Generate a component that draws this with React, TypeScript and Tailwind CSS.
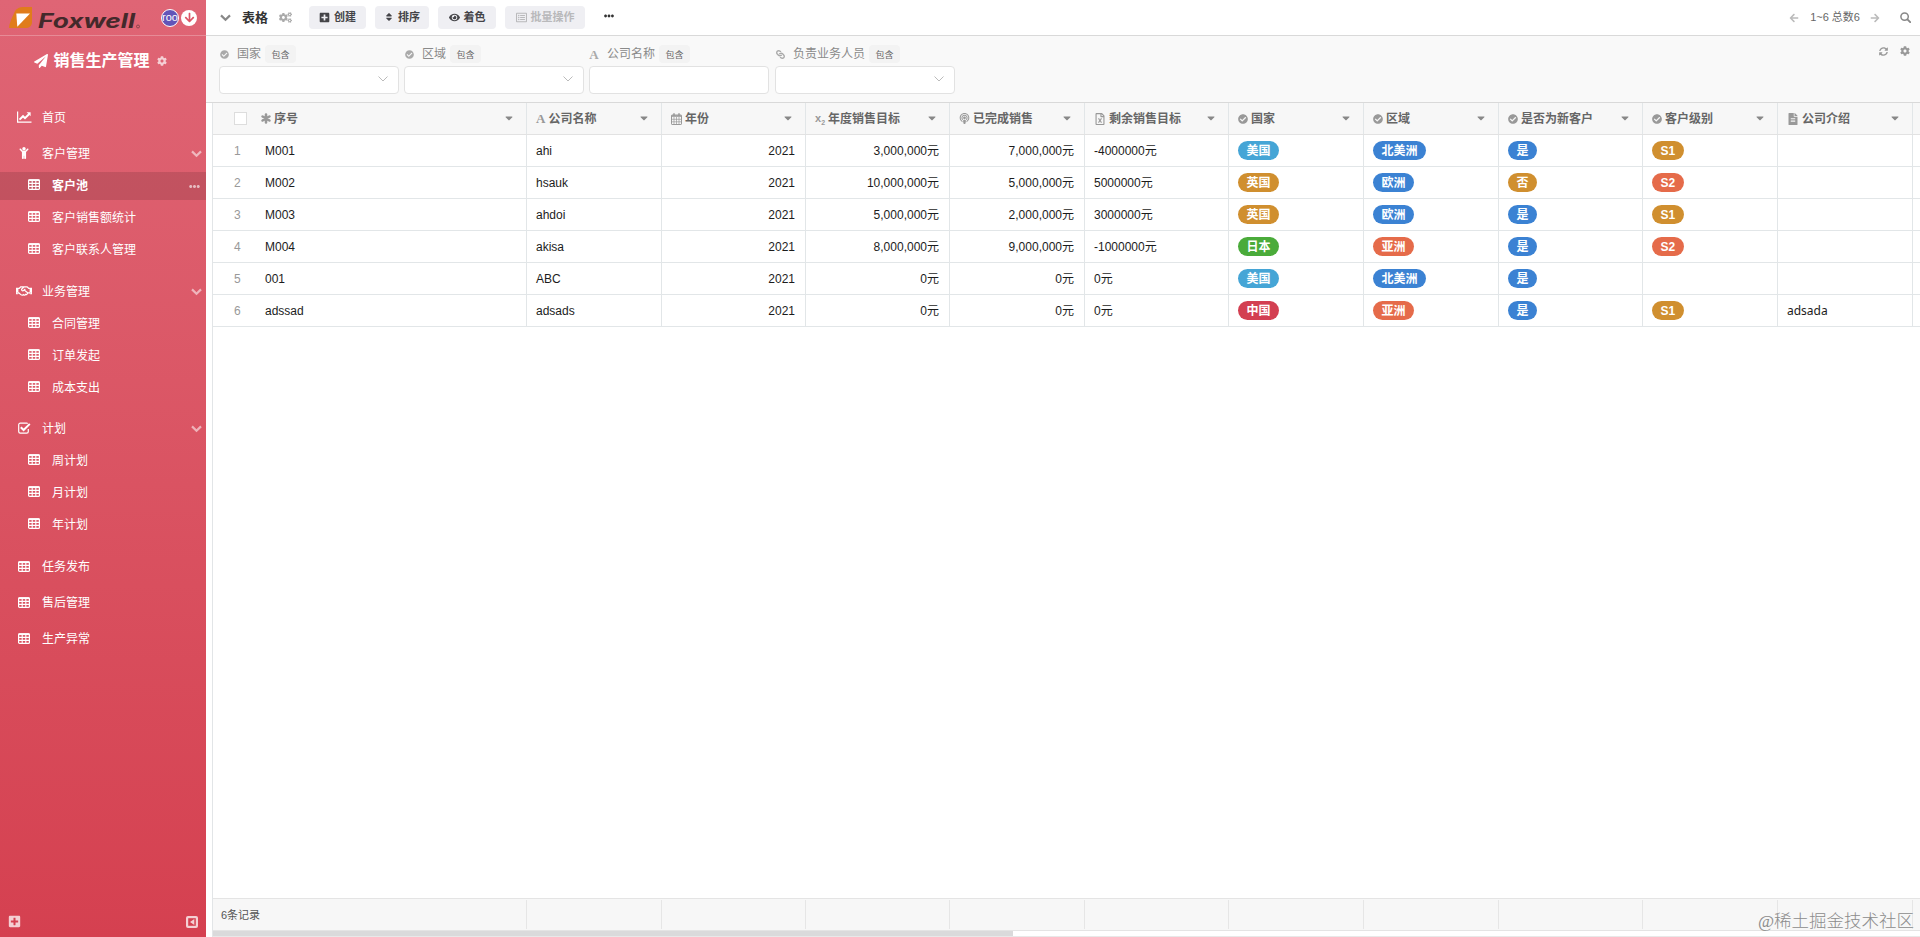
import type { ReactNode } from "react"
import clsx from "clsx"
import {
  FaArrowDown, FaArrowLeft, FaArrowRight, FaCaretDown, FaCheckCircle, FaChild, FaCog, FaCogs, FaEllipsisH,
  FaEye, FaFileAlt, FaLink, FaPaperPlane, FaPlusSquare, FaPodcast, FaRegFileExcel, FaRegHandshake,
  FaRegListAlt, FaSort, FaSyncAlt,
} from "react-icons/fa"

interface NavItem {
  title: string
  icon: ReactNode
  gap?: string
  children?: string[]
}

interface Column {
  title: string
  icon: ReactNode
  width: string
}

interface Filter {
  title: string
  icon: ReactNode
  width: string
  select: boolean
}

function TableIcon() {
  return (
    <svg width="12" height="11" viewBox="0 0 12 11" fill="none" stroke="currentColor">
      <rect x="0.6" y="0.8" width="10.8" height="9.6" rx="1" strokeWidth="1.2" />
      <path d="M0.5 1.2h11" strokeWidth="1.8" />
      <path d="M4.2 1v9.4M7.8 1v9.4M1 4.4h10M1 7.4h10" strokeWidth="1.1" />
    </svg>
  )
}

function ChartIcon() {
  return (
    <svg width="15" height="12" viewBox="0 0 15 12" fill="none" stroke="currentColor">
      <path d="M0.6 0.5v10.7H14.5" strokeWidth="1.2" />
      <path d="M2.5 8.6L6 5.2L8 7.2L12.2 3" strokeWidth="2" />
      <path d="M9.6 1.2h4v4z" fill="currentColor" stroke="none" />
    </svg>
  )
}

function CheckSquareIcon() {
  return (
    <svg width="13" height="12" viewBox="0 0 13 12" fill="none" stroke="currentColor">
      <path d="M10.3 7v2.6a1.6 1.6 0 0 1-1.6 1.6H2.3A1.6 1.6 0 0 1 0.7 9.6V2.8A1.6 1.6 0 0 1 2.3 1.2h6.4q0.6 0 1 0.3" strokeWidth="1.2" />
      <path d="M2.8 5.2L5.6 8L11.8 1.9" strokeWidth="2" />
    </svg>
  )
}

function ChevronIcon({ className }: { className?: string }) {
  return (
    <svg width="11" height="8" viewBox="0 0 11 8" fill="none" stroke="currentColor" strokeWidth="2.2" className={className}>
      <path d="M1 1.4L5.5 5.8L10 1.4" />
    </svg>
  )
}

function AsteriskIcon() {
  return (
    <svg width="10" height="11" viewBox="0 0 10 11" stroke="currentColor" strokeWidth="2.6" strokeLinecap="round">
      <path d="M5 1.5v8M1.6 3.5l6.8 4M8.4 3.5l-6.8 4" />
    </svg>
  )
}

function CalendarIcon() {
  return (
    <svg width="11" height="12" viewBox="0 0 11 12" fill="none" stroke="currentColor">
      <rect x="0.5" y="2" width="10" height="9.5" rx="0.6" />
      <path d="M0.5 3h10" strokeWidth="1.6" />
      <path d="M3 0.3v2.4M8 0.3v2.4" strokeWidth="1.5" />
      <path d="M3 4v7M5.5 4v7M8 4v7M1 6.3h9M1 8.8h9" strokeWidth="0.7" />
    </svg>
  )
}

function SearchIcon() {
  return (
    <svg width="11" height="11" viewBox="0 0 11 11" fill="none" stroke="currentColor" className="mr-[9px] ml-5 text-[#888]">
      <circle cx="4.6" cy="4.6" r="3.7" strokeWidth="1.5" />
      <path d="M7.4 7.4l2.8 2.8" strokeWidth="1.9" strokeLinecap="round" />
    </svg>
  )
}

function LetterIcon() {
  return <span className="font-['Liberation_Serif',serif] text-[13px] leading-none font-bold">A</span>
}

function SubscriptIcon() {
  return (
    <span className="flex items-end leading-none font-bold">
      <span className="text-[11px]">x</span>
      <span className="-mb-0.5 text-[7px]">2</span>
    </span>
  )
}

function Logo() {
  return (
    <svg width="134" height="26" viewBox="0 0 134 26" className="overflow-visible">
      <path d="M7 6Q10 2 15 2H24V17Q24 22 19 23H1Q1 20 3 15Z" fill="#e07c1c" />
      <path d="M8.3 8.5H22L9.3 21.7Z" fill="#fff" />
      <text
        x="30"
        y="22.5"
        textLength="97"
        lengthAdjust="spacingAndGlyphs"
        fontFamily="Inter"
        fontSize="19.5"
        fontWeight="700"
        fontStyle="italic"
        fill="#43292b"
      >
        Foxwell
      </text>
      <circle cx="130" cy="21.5" r="1.5" fill="none" stroke="#43292b" strokeWidth="0.5" />
    </svg>
  )
}

const navItems: NavItem[] = [
  { title: "首页", icon: <ChartIcon /> },
  { title: "客户管理", icon: <FaChild size={12} />, children: ["客户池", "客户销售额统计", "客户联系人管理"] },
  { title: "业务管理", icon: <FaRegHandshake size={16} />, gap: "mt-2", children: ["合同管理", "订单发起", "成本支出"] },
  { title: "计划", icon: <CheckSquareIcon />, gap: "mt-[7px]", children: ["周计划", "月计划", "年计划"] },
  { title: "任务发布", icon: <TableIcon />, gap: "mt-2" },
  { title: "售后管理", icon: <TableIcon /> },
  { title: "生产异常", icon: <TableIcon /> },
]

const filters: Filter[] = [
  { title: "国家", icon: <FaCheckCircle size={9} />, width: "w-[185px]", select: true },
  { title: "区域", icon: <FaCheckCircle size={9} />, width: "w-[185px]", select: true },
  { title: "公司名称", icon: <LetterIcon />, width: "w-[186px]", select: false },
  { title: "负责业务人员", icon: <FaLink size={9} className="rotate-90" />, width: "w-[185px]", select: true },
]

const columns: Column[] = [
  { title: "序号", icon: <AsteriskIcon />, width: "w-[314px]" },
  { title: "公司名称", icon: <LetterIcon />, width: "w-[135px]" },
  { title: "年份", icon: <CalendarIcon />, width: "w-[144px]" },
  { title: "年度销售目标", icon: <SubscriptIcon />, width: "w-[144px]" },
  { title: "已完成销售", icon: <FaPodcast size={11} />, width: "w-[135px]" },
  { title: "剩余销售目标", icon: <FaRegFileExcel size={12} />, width: "w-[144px]" },
  { title: "国家", icon: <FaCheckCircle size={10} />, width: "w-[135px]" },
  { title: "区域", icon: <FaCheckCircle size={10} />, width: "w-[135px]" },
  { title: "是否为新客户", icon: <FaCheckCircle size={10} />, width: "w-[144px]" },
  { title: "客户级别", icon: <FaCheckCircle size={10} />, width: "w-[135px]" },
  { title: "公司介绍", icon: <FaFileAlt size={12} />, width: "w-[135px]" },
]

const rows: string[][] = [
  ["M001", "ahi", "2021", "3,000,000元", "7,000,000元", "-4000000元", "美国", "北美洲", "是", "S1", ""],
  ["M002", "hsauk", "2021", "10,000,000元", "5,000,000元", "5000000元", "英国", "欧洲", "否", "S2", ""],
  ["M003", "ahdoi", "2021", "5,000,000元", "2,000,000元", "3000000元", "英国", "欧洲", "是", "S1", ""],
  ["M004", "akisa", "2021", "8,000,000元", "9,000,000元", "-1000000元", "日本", "亚洲", "是", "S2", ""],
  ["001", "ABC", "2021", "0元", "0元", "0元", "美国", "北美洲", "是", "", ""],
  ["adssad", "adsads", "2021", "0元", "0元", "0元", "中国", "亚洲", "是", "S1", "adsada"],
]

const tagColors: Record<string, string> = {
  美国: "bg-[#45a5d6]",
  英国: "bg-[#d08f2f]",
  日本: "bg-[#4aab3a]",
  中国: "bg-[#d33f51]",
  北美洲: "bg-[#3b82d3]",
  欧洲: "bg-[#3b82d3]",
  亚洲: "bg-[#e56b4a]",
  是: "bg-[#3b82d3]",
  否: "bg-[#d08f2f]",
  S1: "bg-[#d08f2f]",
  S2: "bg-[#e56b4a]",
}

function Sidebar() {
  return (
    <aside className="flex w-[206px] shrink-0 flex-col bg-linear-to-b from-[#df6575] to-[#d54050] text-white">
      <div className="flex h-9 shrink-0 items-center border-b border-white/25 pl-2">
        <Logo />
        <div className="ml-[19px] flex h-[18px] w-[18px] items-center justify-center overflow-hidden rounded-full border border-white bg-[#6254b8] text-[11px] leading-none">
          roo
        </div>
        <div className="ml-0.5 flex h-4 w-4 items-center justify-center rounded-full bg-white text-[#dd5566]">
          <FaArrowDown size={11} />
        </div>
      </div>

      <div className="flex h-[50px] shrink-0 items-center justify-center pr-[5px]">
        <FaPaperPlane size={14} />
        <span className="ml-[5px] text-base font-bold">销售生产管理</span>
        <FaCog size={10} className="ml-[7px] opacity-70" />
      </div>

      <nav className="mt-[14px] text-xs">
        {navItems.map((item) => (
          <div key={item.title} className={item.gap}>
            <div className="flex h-9 items-center">
              <span className="mb-0.5 ml-4 flex w-4 justify-center">{item.icon}</span>
              <span className="ml-[10px] flex-1">{item.title}</span>
              {item.children && <ChevronIcon className="mr-1 opacity-55" />}
            </div>
            {item.children && (
              <div className="-mt-0.5 flex flex-col gap-1 py-0.5">
                {item.children.map((child) => (
                  <div key={child} className={clsx("flex h-7 items-center", child === "客户池" && "bg-black/12 font-bold")}>
                    <span className="mb-[3px] ml-7"><TableIcon /></span>
                    <span className="ml-3 flex-1">{child}</span>
                    {child === "客户池" && <FaEllipsisH size={11} className="mr-1.5 opacity-60" />}
                  </div>
                ))}
              </div>
            )}
          </div>
        ))}
      </nav>

      <div className="mt-auto flex items-center justify-between px-2 pb-[9px]">
        <FaPlusSquare size={13} className="opacity-75" />
        <svg width="12" height="12" viewBox="0 0 12 12" className="opacity-75">
          <rect width="12" height="12" rx="2" fill="#fff" />
          <rect x="2.2" y="2.2" width="7.6" height="7.6" fill="#d54050" />
          <path d="M8.3 3v6L4 6z" fill="#fff" />
        </svg>
      </div>
    </aside>
  )
}

function ToolButton({ icon, label, width, disabled }: { icon: ReactNode; label: string; width: string; disabled?: boolean }) {
  return (
    <button
      className={clsx(
        "mr-[9px] flex h-[23px] items-center justify-center gap-1 rounded bg-[#efeff3] text-[11px] font-bold",
        width,
        disabled ? "text-[#b9b9bb]" : "text-[#444448]"
      )}
    >
      {icon}
      {label}
    </button>
  )
}

function Toolbar() {
  return (
    <header className="flex h-9 shrink-0 items-center border-b border-[#d9d9d9]">
      <ChevronIcon className="ml-[14px] text-[#888]" />
      <span className="ml-[11px] text-[13px] font-bold text-[#333]">表格</span>
      <FaCogs size={13} className="ml-[11px] text-[#aaa]" />
      <div className="-mt-px ml-[17px] flex items-center">
        <ToolButton icon={<FaPlusSquare size={11} />} label="创建" width="w-[57px]" />
        <ToolButton icon={<FaSort size={10} />} label="排序" width="w-[54px]" />
        <ToolButton icon={<FaEye size={11} />} label="着色" width="w-[58px]" />
        <ToolButton icon={<FaRegListAlt size={11} />} label="批量操作" width="w-[80px]" disabled />
        <FaEllipsisH size={10} className="mb-0.5 ml-[10px] text-[#333]" />
      </div>
      <div className="ml-auto flex items-center text-[11px] text-[#666]">
        <FaArrowLeft size={10} className="text-[#bbb]" />
        <span className="ml-[11px]">1~6 总数6</span>
        <FaArrowRight size={10} className="ml-[10px] text-[#bbb]" />
        <SearchIcon />
      </div>
    </header>
  )
}

function FilterBar() {
  return (
    <div className="flex h-[67px] shrink-0 border-b border-[#d9d9d9] bg-[#f9f9f9] pl-[13px]">
      {filters.map((filter) => (
        <div key={filter.title} className={clsx("shrink-0", filter.width)}>
          <div className="flex h-[30px] items-center pt-1.5 text-xs text-[#8a8a8a]">
            <span className="flex w-[10px] justify-center text-[#aaa]">{filter.icon}</span>
            <span className="ml-2">{filter.title}</span>
            <span className="ml-1 flex h-[18px] w-[31px] items-center justify-center rounded bg-[#f3f3f3] pt-px text-[9px] text-[#666]">
              包含
            </span>
          </div>
          <div className="flex h-7 w-[180px] items-center justify-end rounded border border-[#e2e2e2] bg-white pr-[10px]">
            {filter.select && (
              <svg width="10" height="6" viewBox="0 0 10 6" fill="none" stroke="#bbb" className="mb-0.5">
                <path d="M0.5 0.5L5 5L9.5 0.5" />
              </svg>
            )}
          </div>
        </div>
      ))}
      <div className="mt-[10px] mr-[10px] ml-auto flex h-[10px] items-center gap-3 text-[#999]">
        <FaSyncAlt size={9} />
        <FaCog size={10} />
      </div>
    </div>
  )
}

function renderCell(value: string, index: number) {
  if (index >= 6 && index <= 9) {
    return value ? (
      <span className={clsx("flex h-[19px] items-center rounded-full px-[8.5px] font-bold text-white", tagColors[value])}>{value}</span>
    ) : null
  }
  return value
}

function DataTable() {
  return (
    <div className="ml-1.5 flex min-h-0 flex-1 flex-col border-l border-[#e2e5e7] text-xs">
      <div className="flex h-8 shrink-0 border-b border-[#e2e2e2] bg-[#f7f7f7]">
        {columns.map((col, i) => (
          <div key={col.title} className={clsx("flex shrink-0 items-center border-r border-[#e2e6e8]", col.width, i === 0 ? "pl-[21px]" : "pl-[9px]")}>
            {i === 0 && <span className="mr-[14px] h-[13px] w-[13px] border border-[#ddd] bg-white" />}
            <span className="mr-[3px] text-[#999]">{col.icon}</span>
            <span className="flex-1 font-bold text-[#666]">{col.title}</span>
            <FaCaretDown size={12} className="mr-[11px] mb-px text-[#888]" />
          </div>
        ))}
      </div>
      {rows.map((row, r) => (
        <div key={r} className="flex h-8 shrink-0 border-b border-[#e2e6e8] text-[#1c1c1c]">
          {row.map((value, i) => (
            <div
              key={i}
              className={clsx(
                "flex shrink-0 items-center border-r border-[#e2e6e8]",
                columns[i].width,
                i >= 2 && i <= 4 ? "justify-end pr-[10px]" : i > 0 && "pl-[9px]",
                i === 10 && "font-['Noto_Sans']"
              )}
            >
              {i === 0 && <span className="mr-5 w-8 pl-[21px] text-[#999]">{r + 1}</span>}
              {renderCell(value, i)}
            </div>
          ))}
        </div>
      ))}
      <div className="mt-auto flex h-[33px] shrink-0 border-y border-[#e4e4e4] bg-[#f7f7f7]">
        {columns.map((col, i) => (
          <div key={col.title} className={clsx("my-px flex shrink-0 items-center border-r border-[#e6e6e6] pt-0.5 pl-2 text-[11px] text-[#555]", col.width)}>
            {i === 0 && "6条记录"}
          </div>
        ))}
      </div>
      <div className="h-1.5 shrink-0 border-b border-[#e8e8e8]">
        <div className="h-[5px] w-[800px] bg-[#dadadb]" />
      </div>
    </div>
  )
}

export default function App() {
  return (
    <div className="relative flex h-[937px] w-[1920px] overflow-hidden bg-white font-['Liberation_Sans','Noto_Sans_CJK_SC',sans-serif]">
      <Sidebar />
      <main className="flex min-w-0 flex-1 flex-col">
        <Toolbar />
        <FilterBar />
        <DataTable />
      </main>
      <div className="absolute right-1.5 bottom-1 font-['Liberation_Serif','Noto_Sans_CJK_SC',serif] text-[17.5px] leading-6 font-light text-[#8c8c8c]">
        @稀土掘金技术社区
      </div>
    </div>
  )
}
